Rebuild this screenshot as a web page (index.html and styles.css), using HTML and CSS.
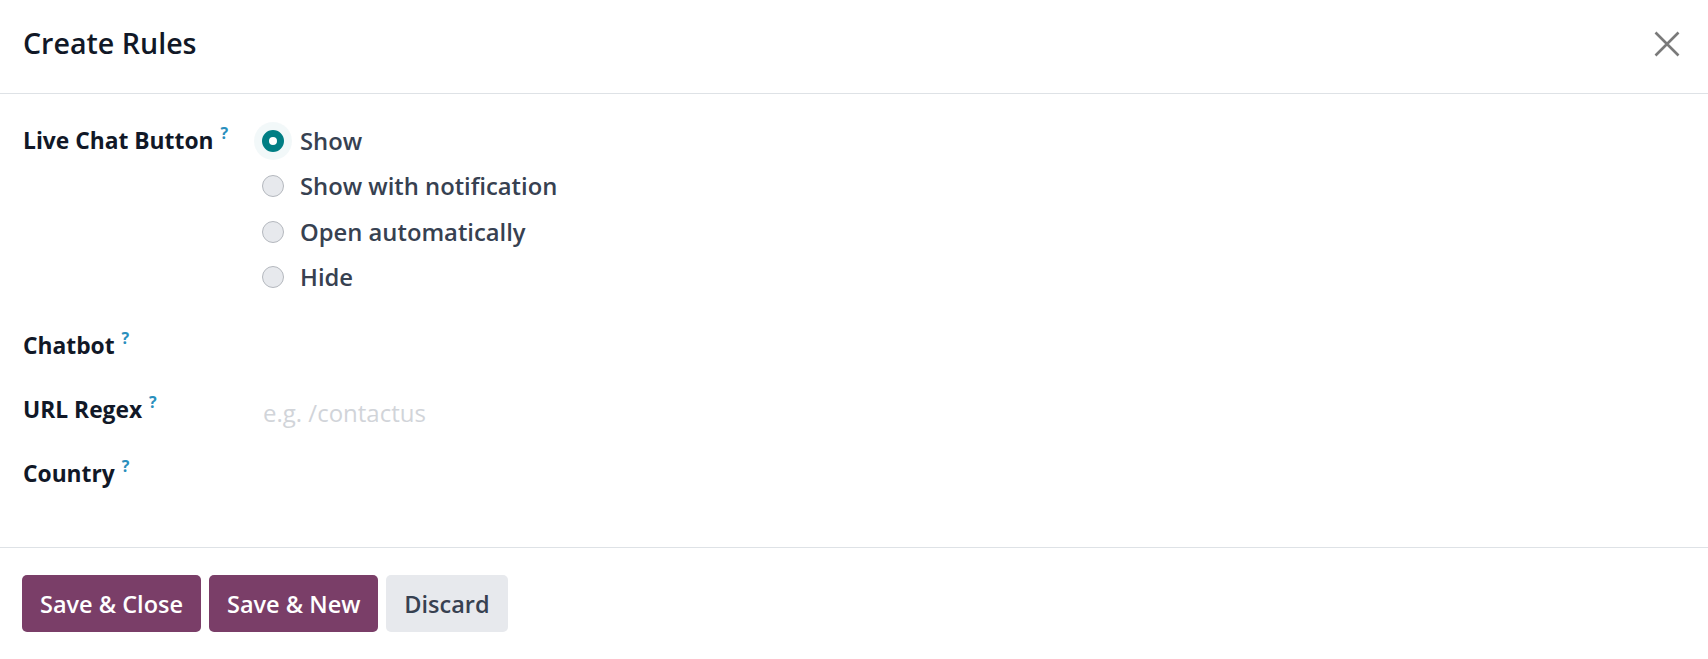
FILE: index.html
```html
<!DOCTYPE html>
<html>
<head>
<meta charset="utf-8">
<link rel="stylesheet" href="styles.css">
</head>
<body>
<div class="modal">
  <header class="modal-header">
    <h4 class="modal-title">Create Rules</h4>
    <button class="close-btn" aria-label="Close">
      <svg width="26" height="26" viewBox="0 0 26 26"><path d="M1.5 1.5 L24.5 24.5 M24.5 1.5 L1.5 24.5" stroke="#7a7a7a" stroke-width="2.6" fill="none"/></svg>
    </button>
  </header>
  <main class="modal-body">
    <div class="field field-radio">
      <label class="field-label">Live Chat Button <sup>?</sup></label>
      <div class="radio-list">
        <div class="radio-item"><span class="radio checked"></span><span class="radio-text">Show</span></div>
        <div class="radio-item"><span class="radio"></span><span class="radio-text">Show with notification</span></div>
        <div class="radio-item"><span class="radio"></span><span class="radio-text">Open automatically</span></div>
        <div class="radio-item"><span class="radio"></span><span class="radio-text">Hide</span></div>
      </div>
    </div>
    <div class="field">
      <label class="field-label">Chatbot <sup>?</sup></label>
      <div class="field-value"></div>
    </div>
    <div class="field">
      <label class="field-label">URL Regex <sup>?</sup></label>
      <div class="field-value"><span class="placeholder">e.g. /contactus</span></div>
    </div>
    <div class="field">
      <label class="field-label">Country <sup>?</sup></label>
      <div class="field-value"></div>
    </div>
  </main>
  <footer class="modal-footer">
    <button class="btn btn-primary">Save &amp; Close</button>
    <button class="btn btn-primary">Save &amp; New</button>
    <button class="btn btn-secondary">Discard</button>
  </footer>
</div>
</body>
</html>
```
FILE: styles.css
```css
html, body {
  margin: 0;
  padding: 0;
  background: #ffffff;
}
body {
  font-family: "Open Sans", "Noto Sans", sans-serif;
  color: #111827;
  width: 1708px;
  height: 659px;
  overflow: hidden;
}
.modal {
  display: flex;
  flex-direction: column;
  height: 659px;
}
.modal-header {
  height: 94px;
  box-sizing: border-box;
  border-bottom: 1px solid #dee2e6;
  display: flex;
  align-items: center;
  justify-content: space-between;
  padding: 0 28px 0 23px;
}
.modal-title {
  margin: 0;
  font-size: 28.6px;
  font-weight: 600;
  color: #111827;
  padding-bottom: 8px;
}
.close-btn {
  border: 0;
  background: none;
  padding: 0;
  width: 26px;
  height: 26px;
  display: flex;
  margin-top: -5px;
}
.modal-body {
  padding: 24px 23px 0 23px;
  height: 453px;
  box-sizing: border-box;
  display: flex;
  flex-direction: column;
}
.field {
  display: grid;
  grid-template-columns: 239px 1fr;
  height: 64px;
  align-items: center;
}
.field-radio {
  height: 195px;
  align-items: start;
}
.field-label {
  font-size: 22.8px;
  font-weight: 700;
  color: #111827;
  white-space: nowrap;
}
.field-radio .field-label {
  line-height: 46px;
}
.field-label sup {
  color: #2a8fbd;
  font-size: 16px;
  font-weight: 700;
  vertical-align: 0;
  position: relative;
  top: -10px;
  margin-left: 1px;
}
.radio-list {
  display: flex;
  flex-direction: column;
}
.radio-item {
  height: 45.5px;
  display: flex;
  align-items: center;
}
.radio {
  width: 22px;
  height: 22px;
  box-sizing: border-box;
  border-radius: 50%;
  background: #e7e9ed;
  border: 1px solid #b4b8be;
  margin-right: 16px;
  flex: none;
}
.radio.checked {
  background: #ffffff;
  border: 7px solid #017e84;
  box-shadow: 0 0 0 8px rgba(1, 126, 132, 0.05);
}
.radio-text {
  font-size: 23.8px;
  font-weight: 600;
  color: #374151;
}
.placeholder {
  font-size: 24px;
  color: #d1d4d9;
  position: relative;
  top: 3px;
  margin-left: 1px;
}
.modal-footer {
  border-top: 1px solid #dee2e6;
  padding: 27px 23px 0 22px;
  display: flex;
  gap: 8px;
  align-items: flex-start;
  flex: 1;
}
.btn {
  height: 57px;
  border: 0;
  border-radius: 5px;
  padding: 0 18px;
  font-family: "Open Sans", "Noto Sans", sans-serif;
  font-size: 23.5px;
  font-weight: 600;
}
.btn-primary {
  background: #7a3e68;
  color: #ffffff;
}
.btn-secondary {
  background: #e7e9ed;
  color: #374151;
}
```
